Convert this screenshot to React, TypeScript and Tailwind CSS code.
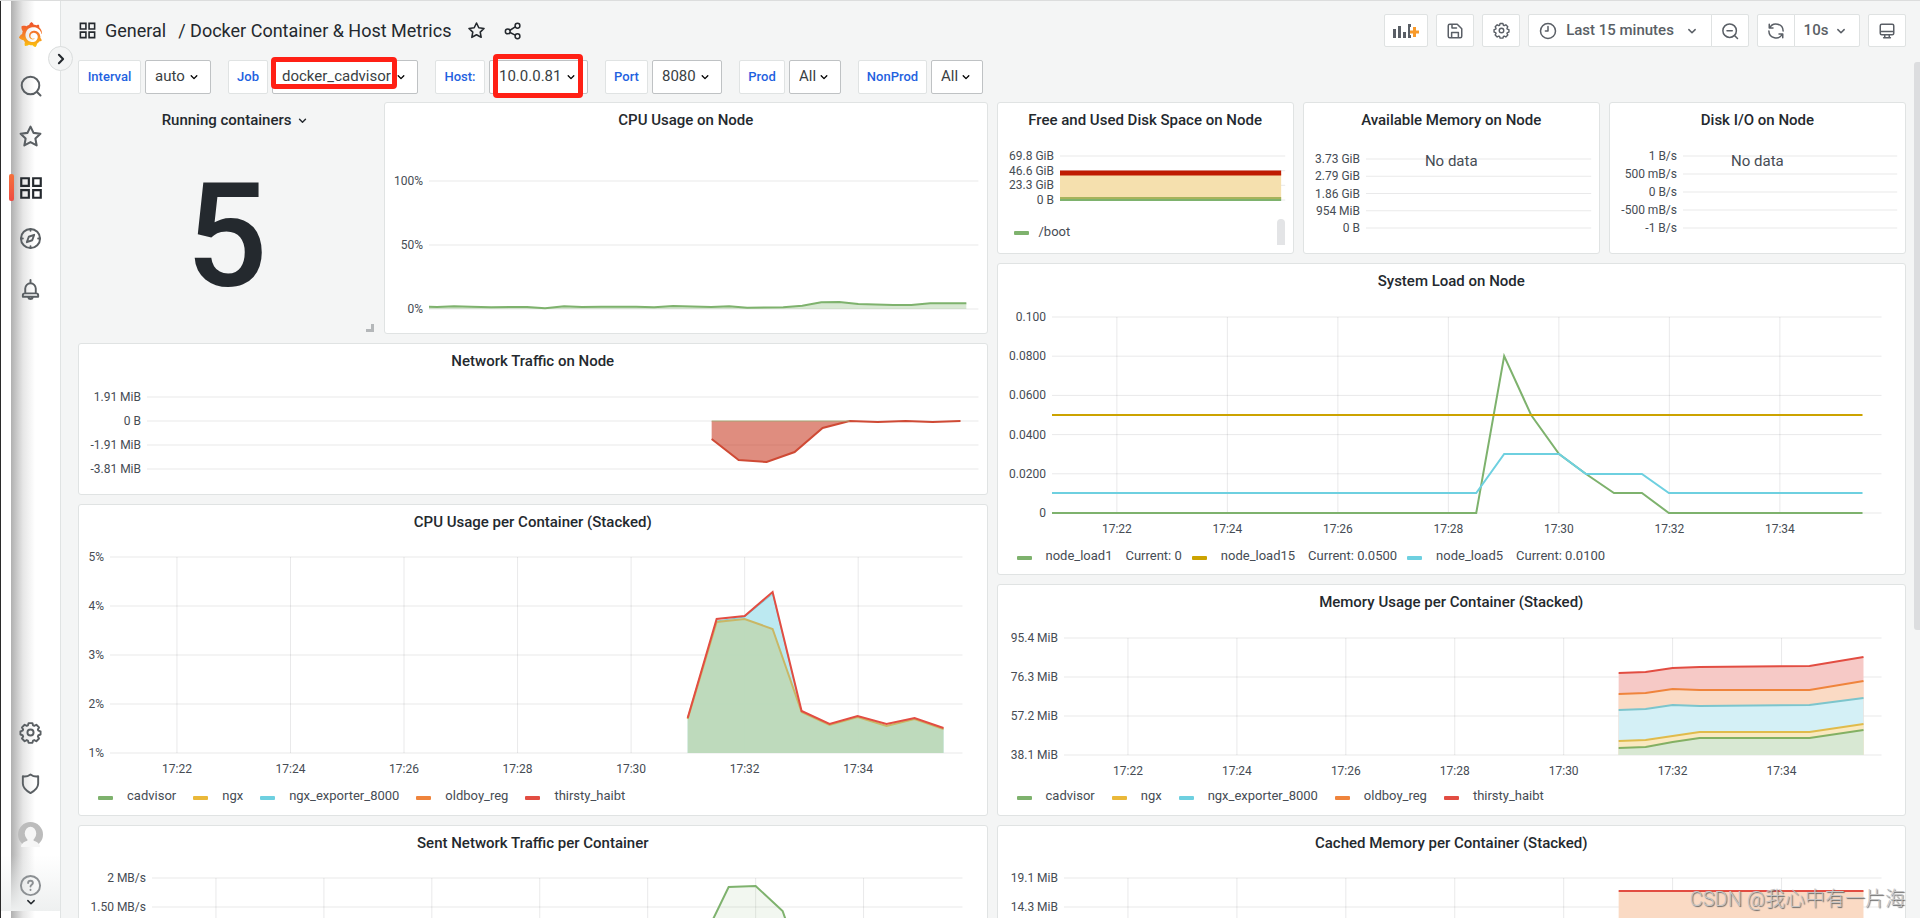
import React from 'react';
import { SiGrafana } from 'react-icons/si';

type Point = [number, number];

interface Series {
  color: string;
  points: Point[];
  fill?: string;
  base?: number;
  strokeWidth?: number;
}

interface ChartProps {
  labels: string[];
  width: number;
  height: number;
  step?: number;
  first?: number;
  timeStep?: number;
  times?: string[];
  series?: Series[];
}

const TIMES = ['17:22', '17:24', '17:26', '17:28', '17:30', '17:32', '17:34'];

const GREEN = '#7eb26d';
const YELLOW = '#eab839';
const CYAN = '#6ed0e0';
const ORANGE = '#ef843c';
const RED = '#e24d42';

const zip = (xs: number[], ys: number[]): Point[] => xs.map((x, i) => [x, ys[i]]);

const toPath = (points: Point[]) => points.map(([x, y]) => `${x},${y}`).join(' ');

// Points are given on a width x height grid, the plot itself stretches with its panel.
const Chart: React.FC<ChartProps> = ({
  labels,
  width,
  height,
  step = height / (labels.length - 1),
  first = 0,
  timeStep = 0,
  times,
  series = [],
}) => {
  const verticals = timeStep ? TIMES.map((_, i) => ((first + i * timeStep) / width) * 100) : [];
  return (
    <svg className="block w-full overflow-visible text-[12px]" height={height}>
      {labels.map((label, i) => (
        <g key={label}>
          <line x1="0" x2="100%" y1={i * step} y2={i * step} stroke="#24292e" strokeOpacity="0.1" />
          <text x="-6" y={i * step + 4} textAnchor="end" fill="#464c54">
            {label}
          </text>
        </g>
      ))}
      {verticals.map((x, i) => (
        <g key={TIMES[i]}>
          <line x1={`${x}%`} x2={`${x}%`} y1="0" y2={height} stroke="#24292e" strokeOpacity="0.1" />
          {times && (
            <text x={`${x}%`} y={height + 20} textAnchor="middle" fill="#464c54">
              {times[i]}
            </text>
          )}
        </g>
      ))}
      <svg
        width="100%"
        height={height}
        viewBox={`0 0 ${width} ${height}`}
        preserveAspectRatio="none"
        className="overflow-visible"
      >
        {series.map((s, i) => (
          <g key={i}>
            {s.fill && (
              <polygon
                fill={s.fill}
                points={`${s.points[0][0]},${s.base ?? height} ${toPath(s.points)} ${
                  s.points[s.points.length - 1][0]
                },${s.base ?? height}`}
              />
            )}
            <polyline
              fill="none"
              stroke={s.color}
              strokeWidth={s.strokeWidth ?? 2}
              vectorEffect="non-scaling-stroke"
              points={toPath(s.points)}
            />
          </g>
        ))}
      </svg>
    </svg>
  );
};

interface PanelProps {
  title: string;
  className: string;
  children?: React.ReactNode;
}

const Panel: React.FC<PanelProps> = ({ title, className, children }) => (
  <section className={`relative rounded-[3px] border border-[#e0e3e3] bg-white ${className}`}>
    <h2 className="pt-[7px] text-center text-[15px] leading-[20px] font-medium text-[#24292e]">{title}</h2>
    {children}
  </section>
);

interface LegendItem {
  color: string;
  name: string;
  value?: string;
}

const Legend: React.FC<{ items: LegendItem[]; className?: string }> = ({ items, className = 'gap-x-[17px]' }) => (
  <ul className={`flex pl-[19px] text-[13px] leading-[18px] text-[#464c54] ${className}`}>
    {items.map((item) => (
      <li key={item.name} className="flex items-center">
        <span className="mt-[3px] mr-[14px] h-[4px] w-[15px] rounded-[1px]" style={{ background: item.color }} />
        {item.name}
        {item.value && <span className="ml-[13px]">Current: {item.value}</span>}
      </li>
    ))}
  </ul>
);

const CONTAINERS: LegendItem[] = [
  { color: GREEN, name: 'cadvisor' },
  { color: YELLOW, name: 'ngx' },
  { color: CYAN, name: 'ngx_exporter_8000' },
  { color: ORANGE, name: 'oldboy_reg' },
  { color: RED, name: 'thirsty_haibt' },
];

interface IconProps {
  className?: string;
  children: React.ReactNode;
}

const Icon: React.FC<IconProps> = ({ className = 'size-[21px]', children }) => (
  <svg
    className={className}
    viewBox="0 0 24 24"
    fill="none"
    stroke="currentColor"
    strokeWidth="2"
    strokeLinecap="round"
    strokeLinejoin="round"
    aria-hidden="true"
  >
    {children}
  </svg>
);

const starPath =
  'M12 2.5l2.9 6 6.6.9-4.8 4.6 1.2 6.6-5.9-3.2-5.9 3.2 1.2-6.6L2.5 9.4l6.6-.9z';
const gearPath =
  'M10 2.2h4l.7 2.4 1.2.5 2.2-1.2 2.8 2.8-1.2 2.2.5 1.2 2.3.7v3.4l-2.3.7-.5 1.2 1.2 2.2-2.8 2.8-2.2-1.2-1.2.5-.7 2.4h-4l-.7-2.4-1.2-.5-2.2 1.2-2.8-2.8 1.2-2.2-.5-1.2-2.3-.7v-3.4l2.3-.7.5-1.2-1.2-2.2 2.8-2.8 2.2 1.2 1.2-.5z';

const Apps = ({ className }: { className?: string }) => (
  <Icon className={className}>
    <g strokeLinejoin="miter">
      <path d="M3 3h7v7H3zM14 3h7v7h-7zM3 14h7v7H3zM14 14h7v7h-7z" />
    </g>
  </Icon>
);

const Star = ({ className }: { className?: string }) => (
  <Icon className={className}>
    <path d={starPath} />
  </Icon>
);

const Gear = ({ className }: { className?: string }) => (
  <Icon className={className}>
    <path d={gearPath} />
    <circle cx="12" cy="12" r="3.2" />
  </Icon>
);

const Chevron = ({ className = 'size-[16px]' }: { className?: string }) => (
  <Icon className={className}>
    <path d="M7.8 10.2l4.200 4.200 4.200-4.200" />
  </Icon>
);

const SideLink: React.FC<{ label: string; active?: boolean; children: React.ReactNode }> = ({
  label,
  active,
  children,
}) => (
  <a
    href="#"
    aria-label={label}
    className={`relative flex h-[51px] items-center justify-center ${active ? 'text-[#24292e]' : 'text-[#5a5f63]'}`}
  >
    {active && (
      <span className="absolute top-[12px] left-[8px] h-[27px] w-[5px] rounded-[2px] bg-linear-to-b from-[#f5713b] to-[#ee4a42]" />
    )}
    {children}
  </a>
);

const Sidebar = () => (
  <nav className="relative flex w-[61px] shrink-0 flex-col border-r border-l border-r-[#e0e3e3] border-l-[#2a2a2a] bg-white pb-[7px]">
    <div className="absolute inset-y-0 left-[10px] w-[24px] bg-linear-to-r from-[#b0b0b0] via-[#e6e6e6] to-white" />
    <div className="absolute inset-x-0 bottom-[7px] h-[56px] bg-linear-to-b from-[#f4f5f5]/0 to-[#eef0f0]" />
    <svg className="absolute size-0" aria-hidden="true">
      <linearGradient id="flame" x1="0" y1="0" x2="0" y2="1">
        <stop offset="0" stopColor="#ee4f2a" />
        <stop offset="0.5" stopColor="#f47f2a" />
        <stop offset="1" stopColor="#fbc50d" />
      </linearGradient>
    </svg>
    <div className="relative flex grow flex-col pt-[8px]">
      <SideLink label="Home">
        <SiGrafana className="size-[25px]" fill="url(#flame)" />
      </SideLink>
      <SideLink label="Search">
        <Icon className="size-[24px]">
          <circle cx="11.5" cy="11.5" r="8.8" />
          <path d="M18 18l3.5 3.5" />
        </Icon>
      </SideLink>
      <SideLink label="Starred">
        <Star className="size-[25px]" />
      </SideLink>
      <SideLink label="Dashboards" active>
        <Apps className="size-[26px]" />
      </SideLink>
      <SideLink label="Explore">
        <Icon className="size-[23px]">
          <circle cx="12" cy="12" r="10" />
          <path d="M15.8 8.2l-2 5.6-5.6 2 2-5.6zM12 2v2M12 20v2M2 12h2M20 12h2" />
        </Icon>
      </SideLink>
      <SideLink label="Alerting">
        <Icon className="size-[23px]">
          <path d="M12 2v3M6.500 16v-5a5.500 5.500 0 0111 0v5M4 19.500V18a2 2 0 012-2h12a2 2 0 012 2v1.500zM9.500 20a2.600 2.600 0 005 0" />
        </Icon>
      </SideLink>
      <div className="mt-auto flex flex-col">
        <SideLink label="Configuration">
          <Gear className="size-[23px]" />
        </SideLink>
        <SideLink label="Server admin">
          <Icon className="size-[23px]">
            <path d="M4 4.500c3 .6 5.600-.2 8-2 2.400 1.800 5 2.600 8 2V12c0 4-3.500 7.500-8 10-4.500-2.500-8-6-8-10z" />
          </Icon>
        </SideLink>
        <SideLink label="Profile">
          <svg className="size-[25px]" viewBox="0 0 24 24" aria-hidden="true">
            <circle cx="12" cy="12" r="12" fill="#bcbcbc" />
            <ellipse cx="12" cy="11" rx="5.500" ry="6.500" fill="#f6f6f6" />
            <path d="M9 15h6v3c3 .7 5 2.600 6 4.500V24H3v-1.500C4 20.600 6 18.700 9 18z" fill="#f6f6f6" />
          </svg>
        </SideLink>
        <SideLink label="Help">
          <span className="text-[#8c9093]">
            <Icon className="size-[23px]">
              <circle cx="12" cy="12" r="10" />
              <path d="M9.500 9.500a2.500 2.500 0 115 0c0 1.600-2.500 1.800-2.500 3.500M12 16.500v.2" />
            </Icon>
          </span>
          <Chevron className="absolute bottom-0 size-[18px] text-[#24292e]" />
        </SideLink>
      </div>
    </div>
    <button
      aria-label="Expand menu"
      className="absolute top-[45px] -right-[13px] z-10 flex size-[25px] items-center justify-center rounded-full border border-[#dadddd] bg-[#f4f5f5] text-[#24292e]"
    >
      <Icon className="size-[20px]">
        <path d="M9.500 7l5 5-5 5" strokeWidth="2.500" />
      </Icon>
    </button>
  </nav>
);

const toolButton =
  'flex h-[33px] items-center justify-center border border-[#dfe2e2] bg-white text-[15px] font-medium text-[#5a5f66]';

const Toolbar = () => (
  <header className="flex items-center pt-[13px] pr-[14px] pl-[17px] text-[#24292e]">
    <Apps className="size-[19px]" />
    <h1 className="ml-[8px] flex gap-[12px] text-[18px] leading-[24px]">
      <a href="#">General</a>
      <a href="#">/ Docker Container &amp; Host Metrics</a>
    </h1>
    <button aria-label="Mark as favorite" className="ml-[16px]">
      <Star className="size-[19px]" />
    </button>
    <button aria-label="Share dashboard" className="ml-[18px]">
      <Icon className="size-[18px]">
        <circle cx="5" cy="12.500" r="3.200" />
        <circle cx="18" cy="5" r="3.200" />
        <circle cx="18" cy="19" r="3.200" />
        <path d="M8 11l7-4.500M8 14l7 3.500" />
      </Icon>
    </button>
    <div className="ml-auto flex gap-[8px]">
      <button aria-label="Add panel" className={`${toolButton} w-[44px] rounded-[2px]`}>
        <svg className="h-[18px] w-[26px]" viewBox="0 0 26 18" aria-hidden="true">
          <path d="M0 7h3v9H0zM5 4h3v12H5zM10 10h3v6h-3zM15 2h3v3h-1v8h1v3h-3z" fill="#5a5f66" />
          <path d="M20 5h3v3.500h3v3h-3V15h-3v-3.500h-3v-3h3z" fill="#f89a2a" />
        </svg>
      </button>
      <button aria-label="Save dashboard" className={`${toolButton} w-[38px] rounded-[2px]`}>
        <Icon className="size-[18px]">
          <path d="M3 5a2 2 0 012-2h10l6 6v10a2 2 0 01-2 2H5a2 2 0 01-2-2zM8 3v5h6M7.500 21v-7h9v7" />
        </Icon>
      </button>
      <button aria-label="Dashboard settings" className={`${toolButton} w-[38px] rounded-[2px]`}>
        <Gear className="size-[17px]" />
      </button>
      <div className="flex">
        <button className={`${toolButton} w-[184px] rounded-l-[2px]`}>
          <Icon className="size-[18px]">
            <circle cx="12" cy="12" r="10" />
            <path d="M12 6v6H8.500" />
          </Icon>
          <span className="mr-[9px] ml-[9px]">Last 15 minutes</span>
          <Chevron className="size-[18px]" />
        </button>
        <button aria-label="Zoom out time range" className={`${toolButton} -ml-px w-[38px] rounded-r-[2px]`}>
          <Icon className="size-[18px]">
            <circle cx="11.500" cy="11.500" r="9" />
            <path d="M18 18l4 4M8 11.500h7" />
          </Icon>
        </button>
      </div>
      <div className="flex">
        <button aria-label="Refresh dashboard" className={`${toolButton} w-[38px] rounded-l-[2px]`}>
          <Icon className="size-[18px]">
            <path d="M3 3v5h5M3.500 8A9.500 9.500 0 0121.500 12M21 21v-5h-5M20.500 16A9.500 9.500 0 012.500 12" />
          </Icon>
        </button>
        <button className={`${toolButton} -ml-px w-[66px] gap-[4px] rounded-r-[2px]`}>
          10s
          <Chevron className="size-[18px]" />
        </button>
      </div>
      <button aria-label="Cycle view mode" className={`${toolButton} w-[38px] rounded-[2px]`}>
        <Icon className="size-[18px]">
          <path d="M5 3h14a2 2 0 012 2v10a2 2 0 01-2 2H5a2 2 0 01-2-2V5a2 2 0 012-2zM3 12.500h18M9 17v4M15 17v4M7.500 21h9" />
        </Icon>
      </button>
    </div>
  </header>
);

const VARIABLES = [
  { name: 'Interval', value: 'auto', labelClass: 'w-[63px]', selectClass: 'w-[66px]' },
  {
    name: 'Job',
    value: 'docker_cadvisor',
    labelClass: 'w-[40px]',
    selectClass: 'w-[146px]',
    mark: '-top-[3px] -left-[1px] h-[32px] w-[126px]',
  },
  {
    name: 'Host:',
    value: '10.0.0.81',
    labelClass: 'w-[50px]',
    selectClass: 'w-[99px]',
    mark: '-top-[6px] left-[4px] h-[44px] w-[90px]',
  },
  { name: 'Port', value: '8080', labelClass: 'w-[43px]', selectClass: 'w-[70px]' },
  { name: 'Prod', value: 'All', labelClass: 'w-[46px]', selectClass: 'w-[52px]' },
  { name: 'NonProd', value: 'All', labelClass: 'w-[69px]', selectClass: 'w-[52px]' },
];

const Variables = () => (
  <form className="mt-[13px] flex gap-[17px] pl-[17px]">
    {VARIABLES.map((v) => (
      <div key={v.name} className="flex gap-[4px]">
        <label
          htmlFor={v.name}
          className={`flex h-[34px] items-center justify-center rounded-[2px] border border-[#e0e3e3] bg-white text-[13px] font-medium text-[#1f62e0] ${v.labelClass}`}
        >
          {v.name}
        </label>
        <div className={`relative ${v.selectClass}`}>
          <select
            id={v.name}
            className="block h-[34px] w-full appearance-none rounded-[2px] border border-[#bfc2c4] bg-white pb-[2px] pl-[9px] text-[15px] text-[#3a3f44]"
          >
            <option>{v.value}</option>
          </select>
          <Chevron className="pointer-events-none absolute top-[9px] right-[9px] size-[16px]" />
          {v.mark && (
            <span className={`pointer-events-none absolute rounded-[4px] border-[5px] border-[#ff2015] ${v.mark}`} />
          )}
        </div>
      </div>
    ))}
  </form>
);

const cpuX = [578, 607, 635, 663, 692, 720, 748, 777, 805, 834];
const memX = [555, 582, 609, 636, 746, 800];
const nodeCpu: Point[] = [
  [0, 125.7], [8, 126], [25, 125.3], [42, 125.7], [62, 126.3], [81, 126], [98, 126], [116, 127.3], [135, 125.3],
  [153, 126], [172, 125.7], [207, 125.7], [225, 126.3], [244, 125], [282, 126], [300, 125.3], [318, 126.7],
  [354, 126.3], [373, 124.7], [392, 121.3], [410, 121], [429, 123], [464, 124], [482, 124], [501, 122.3], [537, 122.3],
];

const LeftColumn = () => (
  <div className="grid grid-cols-3 gap-[9px]">
    <section className="relative h-[232px]">
      <h2 className="pt-[8px] text-center text-[15px] leading-[20px] font-medium text-[#24292e]">
        <span className="relative">
          Running containers
          <Chevron className="absolute top-[1px] left-full ml-[2px] size-[17px]" />
        </span>
      </h2>
      <p className="mt-[22px] text-center text-[144px] leading-[170px] font-medium text-[#24292e]">5</p>
      <svg className="absolute right-px bottom-[2px] size-[8px]" viewBox="0 0 8 8" aria-hidden="true">
        <path d="M5 0h3v8H0V5h5z" fill="#b4b7b9" />
      </svg>
    </section>
    <Panel title="CPU Usage on Node" className="col-span-2 h-[232px]">
      <div className="mt-[51px] mr-[8px] ml-[44px]">
        <Chart
          labels={['100%', '50%', '0%']}
          width={549}
          height={128}
          series={[{ color: GREEN, fill: '#7eb26d4d', points: nodeCpu }]}
        />
      </div>
    </Panel>
    <Panel title="Network Traffic on Node" className="col-span-3 h-[152px]">
      <div className="mt-[26px] mr-[8px] ml-[68px]">
        <Chart
          labels={['1.91 MiB', '0 B', '-1.91 MiB', '-3.81 MiB']}
          width={832}
          height={72}
          series={[
            {
              color: '#cf4a35',
              fill: '#bf1b0080',
              base: 24,
              points: zip([565, 592, 620, 648, 676, 703, 731, 759, 786, 814], [42, 63, 65, 55, 31, 24, 25, 24, 25, 24]),
            },
            { color: '#a8a878', strokeWidth: 1, points: [[565, 24], [703, 24]] },
          ]}
        />
      </div>
    </Panel>
    <Panel title="CPU Usage per Container (Stacked)" className="col-span-3 h-[312px]">
      <div className="mt-[25px] mr-[24px] mb-[34px] ml-[31px]">
        <Chart
          labels={['5%', '4%', '3%', '2%', '1%']}
          width={853}
          height={196}
          first={67}
          timeStep={113.6}
          times={TIMES}
          series={[
            {
              color: CYAN,
              fill: '#b5e7efe6',
              strokeWidth: 1,
              points: zip(cpuX, [162, 64, 60, 37, 155, 168, 160, 169, 162, 172]),
            },
            {
              color: '#c9b765',
              fill: '#bed8b6e6',
              points: zip(cpuX, [162, 65, 62, 72, 155, 168, 160, 169, 162, 172]),
            },
            { color: RED, points: zip(cpuX, [161, 62, 59, 35, 154, 167, 159, 167, 161, 171]) },
          ]}
        />
      </div>
      <Legend items={CONTAINERS} />
    </Panel>
    <Panel title="Sent Network Traffic per Container" className="col-span-3 h-[312px]">
      <div className="mt-[25px] mr-[24px] ml-[73px]">
        <Chart
          labels={['2 MB/s', '1.50 MB/s']}
          width={811}
          height={117}
          step={29}
          first={64}
          timeStep={108}
          series={[
            {
              color: GREEN,
              fill: '#7eb26d1a',
              points: [[534, 105], [561, 42], [577, 9], [604, 8], [631, 33], [658, 110]],
            },
          ]}
        />
      </div>
    </Panel>
  </div>
);

const RightColumn = () => (
  <div className="grid grid-cols-3 gap-[9px]">
    <Panel title="Free and Used Disk Space on Node" className="h-[152px]">
      <div className="mt-[26px] mr-[8px] ml-[62px]">
        <Chart
          labels={['69.8 GiB', '46.6 GiB', '23.3 GiB', '0 B']}
          width={225}
          height={44}
          series={[
            { color: '#f5e0ae', fill: '#f5e0ae', strokeWidth: 1, points: [[0, 18], [221, 18]] },
            { color: '#a6b35c', points: [[0, 42], [221, 42]] },
            { color: GREEN, points: [[0, 44], [221, 44]] },
            { color: '#bf1b00', strokeWidth: 5, points: [[0, 17], [221, 17]] },
          ]}
        />
      </div>
      <div className="mt-[19px] mr-[8px] flex justify-between">
        <p className="flex items-center pl-[16px] text-[13px] text-[#464c54]">
          <span className="mt-[2px] mr-[10px] h-[4px] w-[15px] rounded-[1px] bg-[#7eb26d]" />
          /boot
        </p>
        <span className="h-[26px] w-[8px] rounded-t-[4px] bg-[#e3e4e6]" />
      </div>
    </Panel>
    <Panel title="Available Memory on Node" className="h-[152px]">
      <div className="mt-[29px] mr-[8px] ml-[62px]">
        <Chart labels={['3.73 GiB', '2.79 GiB', '1.86 GiB', '954 MiB', '0 B']} width={225} height={69} />
      </div>
      <p className="absolute inset-x-0 top-[48px] text-center text-[15px] leading-[20px] text-[#464c54]">No data</p>
    </Panel>
    <Panel title="Disk I/O on Node" className="h-[152px]">
      <div className="mt-[26px] mr-[8px] ml-[73px]">
        <Chart labels={['1 B/s', '500 mB/s', '0 B/s', '-500 mB/s', '-1 B/s']} width={214} height={72} />
      </div>
      <p className="absolute inset-x-0 top-[48px] text-center text-[15px] leading-[20px] text-[#464c54]">No data</p>
    </Panel>
    <Panel title="System Load on Node" className="col-span-3 h-[312px]">
      <div className="mt-[26px] mr-[24px] mb-[34px] ml-[54px]">
        <Chart
          labels={['0.100', '0.0800', '0.0600', '0.0400', '0.0200', '0']}
          width={831}
          height={196}
          first={65}
          timeStep={110.7}
          times={TIMES}
          series={[
            {
              color: GREEN,
              points: zip([0, 425, 453, 480, 508, 535, 563, 591, 618, 812], [196, 196, 39, 98, 137, 157, 176, 176, 196, 196]),
            },
            { color: '#cca300', points: [[0, 98], [812, 98]] },
            {
              color: CYAN,
              points: zip([0, 425, 453, 508, 535, 591, 618, 812], [176, 176, 137, 137, 157, 157, 176, 176]),
            },
          ]}
        />
      </div>
      <Legend
        className="gap-x-[10px]"
        items={[
          { color: GREEN, name: 'node_load1', value: '0' },
          { color: '#cca300', name: 'node_load15', value: '0.0500' },
          { color: CYAN, name: 'node_load5', value: '0.0100' },
        ]}
      />
    </Panel>
    <Panel title="Memory Usage per Container (Stacked)" className="col-span-3 h-[232px]">
      <div className="mt-[26px] mr-[24px] mb-[32px] ml-[66px]">
        <Chart
          labels={['95.4 MiB', '76.3 MiB', '57.2 MiB', '38.1 MiB']}
          width={818}
          height={117}
          first={64}
          timeStep={109}
          times={TIMES}
          series={[
            { color: RED, fill: '#f6c9c6', points: zip(memX, [35, 34, 30, 29, 28, 19]) },
            { color: ORANGE, fill: '#fadac4', points: zip(memX, [56, 55, 51, 52, 52, 43]) },
            { color: '#7cc5cc', fill: '#d4f0f6', points: zip(memX, [72, 71, 67, 68, 67, 60]) },
            { color: '#e0bb4b', fill: '#f9e9c0', points: zip(memX, [103, 102, 98, 94, 94, 86]) },
            { color: '#83b063', fill: '#d8e8d3', points: zip(memX, [110, 109, 104, 100, 100, 92]) },
          ]}
        />
      </div>
      <Legend items={CONTAINERS} />
    </Panel>
    <Panel title="Cached Memory per Container (Stacked)" className="col-span-3 h-[312px]">
      <div className="mt-[25px] mr-[24px] ml-[66px]">
        <Chart
          labels={['19.1 MiB', '14.3 MiB']}
          width={818}
          height={117}
          step={29}
          first={64}
          timeStep={109}
          series={[{ color: RED, fill: '#fadac4', points: [[555, 13], [800, 13]] }]}
        />
      </div>
    </Panel>
  </div>
);

const App: React.FC = () => {
  return (
    <div className="relative flex h-screen overflow-hidden border-t border-[#dcdddd] bg-[#f4f5f5] font-['Roboto','Noto_Sans_CJK_SC',sans-serif]">
      <Sidebar />
      <main className="min-w-0 grow">
        <Toolbar />
        <Variables />
        <div className="mt-[8px] grid grid-cols-2 items-start gap-[9px] pr-[14px] pl-[17px]">
          <LeftColumn />
          <RightColumn />
        </div>
      </main>
      <div className="absolute top-[61px] right-0 h-[568px] w-[6px] rounded-l-[3px] bg-[#dcdddf]" />
      <p className="absolute right-[15px] bottom-[6px] text-[20px] leading-[26px] font-light text-[#c4c4c4] [text-shadow:1px_1px_1px_#666]">
        CSDN @我心中有一片海
      </p>
    </div>
  );
};

export default App;
